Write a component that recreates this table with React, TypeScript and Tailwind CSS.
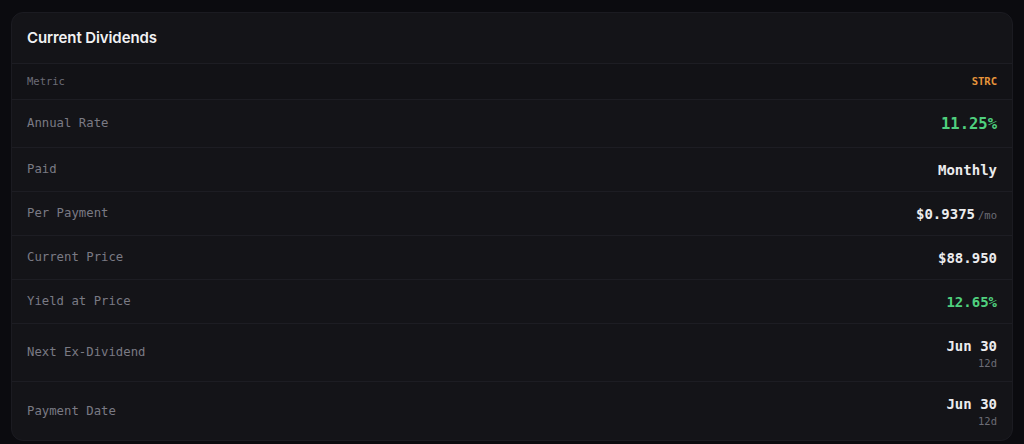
import React from 'react';

interface Row {
    label: string;
    value: string;
    tone?: 'green' | 'white';
    big?: boolean;
    unit?: string;
    sub?: string;
}

const rows: Row[] = [
    { label: 'Annual Rate', value: '11.25%', tone: 'green', big: true },
    { label: 'Paid', value: 'Monthly' },
    { label: 'Per Payment', value: '$0.9375', unit: '/mo' },
    { label: 'Current Price', value: '$88.950' },
    { label: 'Yield at Price', value: '12.65%', tone: 'green' },
    { label: 'Next Ex-Dividend', value: 'Jun 30', sub: '12d' },
    { label: 'Payment Date', value: 'Jun 30', sub: '12d' },
];

const mono = "font-['DejaVu_Sans_Mono','Liberation_Mono',monospace]";

export default function App() {
    return (
        <div className="min-h-[444px] bg-[#0b0b0f] px-[11px] pt-3 pb-[7px]">
            <div className="rounded-xl border border-[#1b1b21] bg-[#141418] overflow-hidden">
                <div className="h-[51px] flex items-center px-[15px] border-b border-[#1d1d23]">
                    <h2 className="font-['Inter',sans-serif] text-[15px] font-semibold text-[#f1f1f3] tracking-[-0.1px]">
                        Current Dividends
                    </h2>
                </div>

                <div className={`h-9 flex items-center justify-between px-[15px] border-b border-[#1d1d23] bg-[#121216] ${mono} text-[10.5px]`}>
                    <span className="text-[#6c6c76]">Metric</span>
                    <span className="text-[#e8953b] font-bold">STRC</span>
                </div>

                {rows.map((r, i) => (
                    <div
                        key={r.label}
                        className={`flex items-center justify-between px-[15px] ${r.big ? 'h-12' : r.sub ? 'h-[58px]' : 'h-11'} ${mono} ${i < rows.length - 1 ? 'border-b border-[#1d1d23]' : ''}`}
                    >
                        <span className="text-[12.3px] text-[#7a7a84]">{r.label}</span>
                        <div className="flex flex-col items-end">
                            <div className="flex items-baseline gap-[3px]">
                                <span
                                    className={`font-bold ${r.big ? 'text-[15.5px] leading-6' : 'text-[14px] leading-5'} ${r.tone === 'green' ? 'text-[#4fd07e]' : 'text-[#ececee]'}`}
                                >
                                    {r.value}
                                </span>
                                {r.unit && <span className="text-[10.5px] text-[#6c6c76]">{r.unit}</span>}
                            </div>
                            {r.sub && <span className="text-[10.5px] leading-[14px] text-[#6c6c76]">{r.sub}</span>}
                        </div>
                    </div>
                ))}
            </div>
        </div>
    );
}
